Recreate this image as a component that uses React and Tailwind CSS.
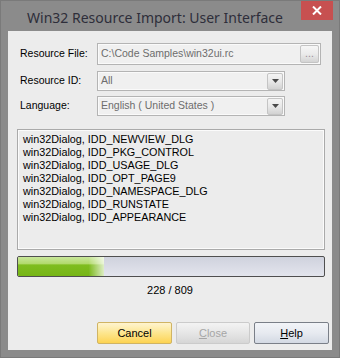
import React from 'react'

const ITEMS = [
  'IDD_NEWVIEW_DLG',
  'IDD_PKG_CONTROL',
  'IDD_USAGE_DLG',
  'IDD_OPT_PAGE9',
  'IDD_NAMESPACE_DLG',
  'IDD_RUNSTATE',
  'IDD_APPEARANCE',
]

const DONE = 228
const TOTAL = 809

function DropArrow() {
  return (
    <div className="w-[16px] h-[17px] mr-[1px] rounded-[2px] border border-[#c4c4c4] bg-linear-to-b from-[#f4f4f4] via-[#e8e8e8] to-[#d2d2d2] flex items-center justify-center">
      <svg width="7" height="4" viewBox="0 0 7 4">
        <path d="M0 0h7L3.5 4z" fill="#4a4a4a" />
      </svg>
    </div>
  )
}

function Combo({ value }) {
  return (
    <div className="w-[188px] h-[20px] border border-[#b4b4b4] bg-[#f0f0f0] shadow-[inset_0_0_0_1px_#fafafa] flex items-center justify-between pl-[3px]">
      <span className="text-[#6d6d6d]">{value}</span>
      <DropArrow />
    </div>
  )
}

export default function App() {
  const pct = DONE / TOTAL

  return (
    <div className="w-[340px] h-[358px] bg-[#8b8b8b] border border-[#7a7a7a] flex flex-col select-none"
      style={{ fontFamily: '"Liberation Sans", Arial, sans-serif' }}>

      {/* Title bar */}
      <div className="h-[30px] flex items-start shrink-0">
        <div className="flex-1 pt-[6px] pl-[8px] text-center text-[14px] text-[#2e2e3a]"
          style={{ fontFamily: '"Noto Sans", "Open Sans", sans-serif' }}>
          Win32 Resource Import: User Interface
        </div>
        <div className="w-[32px] h-[19px] mr-[6px] bg-[#c75050] flex items-center justify-center">
          <svg width="10" height="9" viewBox="0 0 10 9">
            <path d="M1 0.5l8 8M9 0.5l-8 8" stroke="#fff" strokeWidth="2" />
          </svg>
        </div>
      </div>

      {/* Client area */}
      <div className="mx-[7px] h-[319px] bg-[#ececec] text-[10.5px] text-black flex flex-col">

        {/* Fields */}
        <div className="pt-[12px] pl-[12px] flex flex-col">
          <div className="flex items-center h-[22px]">
            <span className="w-[77px]">Resource File:</span>
            <div className="w-[224px] h-[22px] border border-[#b4b4b4] bg-[#f0f0f0] shadow-[inset_0_0_0_1px_#fafafa] flex items-center justify-between pl-[3px]">
              <span className="text-[#6d6d6d]">C:\Code Samples\win32ui.rc</span>
              <div className="w-[19px] h-[18px] mr-[1px] rounded-[2px] border border-[#c4c4c4] bg-linear-to-b from-[#f6f6f6] via-[#ebebeb] to-[#d4d4d4] flex items-center justify-center text-[#9a8c96] leading-none pb-[2px]">
                ...
              </div>
            </div>
          </div>
          <div className="flex items-center h-[20px] mt-[6px]">
            <span className="w-[77px]">Resource ID:</span>
            <Combo value="All" />
          </div>
          <div className="flex items-center h-[20px] mt-[5px]">
            <span className="w-[77px]">Language:</span>
            <Combo value="English ( United States )" />
          </div>
        </div>

        {/* Resource list */}
        <div className="mt-[13px] ml-[9px] w-[308px] h-[121px] border border-[#aaaaaa] shadow-[inset_0_0_0_1px_#fbfbfb] pt-[3px] pl-[5px] leading-[13px] text-[10.8px]">
          {ITEMS.map(id => (
            <div key={id}>win32Dialog, {id}</div>
          ))}
        </div>

        {/* Progress */}
        <div className="mt-[6px] ml-[9px] w-[308px] h-[21px] rounded-[2px] border border-[#4f4f4f] bg-linear-to-b from-[#cfd2dd] via-[#d9dbe5] to-[#e3e5ed] overflow-hidden">
          <div className="h-full bg-[linear-gradient(to_right,transparent_82%,rgba(255,255,255,0.75)),linear-gradient(to_bottom,#c9e79b_0%,#b2da6c_35%,#7fbd1f_42%,#76b516_100%)]"
            style={{ width: `${pct * 100}%` }} />
        </div>
        <div className="mt-[5px] text-center text-[11px]">{DONE} / {TOTAL}</div>

        {/* Buttons */}
        <div className="mt-auto mb-[6px] ml-[89px] flex gap-[4px] text-[11px]">
          <div className="w-[75px] h-[22px] rounded-[2px] border border-[#d0b464] bg-linear-to-b from-[#fff4cf] via-[#fde68e] to-[#fdd350] flex items-center justify-center">
            Cancel
          </div>
          <div className="w-[74px] h-[22px] rounded-[2px] border border-[#cbcbcb] bg-linear-to-b from-[#f3f3f3] via-[#e6e6e6] to-[#d6d6d6] flex items-center justify-center text-[#a6a6a6]">
            <span><span className="underline">C</span>lose</span>
          </div>
          <div className="w-[75px] h-[22px] rounded-[2px] border border-[#7a7f88] bg-linear-to-b from-[#f2f4f8] via-[#e7eaf0] to-[#d3d9e3] flex items-center justify-center">
            <span><span className="underline">H</span>elp</span>
          </div>
        </div>
      </div>
    </div>
  )
}
